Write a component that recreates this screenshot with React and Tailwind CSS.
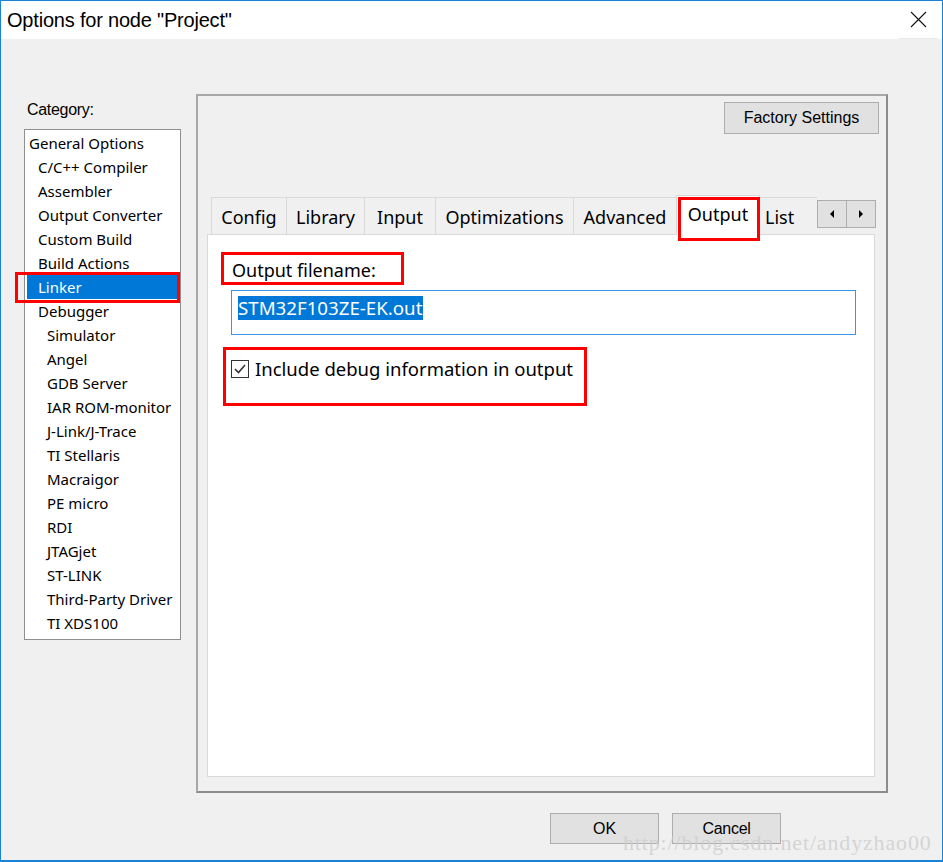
import React from "react";

const categories = [
  { label: "General Options", level: 0 },
  { label: "C/C++ Compiler", level: 1 },
  { label: "Assembler", level: 1 },
  { label: "Output Converter", level: 1 },
  { label: "Custom Build", level: 1 },
  { label: "Build Actions", level: 1 },
  { label: "Linker", level: 1, selected: true },
  { label: "Debugger", level: 1 },
  { label: "Simulator", level: 2 },
  { label: "Angel", level: 2 },
  { label: "GDB Server", level: 2 },
  { label: "IAR ROM-monitor", level: 2 },
  { label: "J-Link/J-Trace", level: 2 },
  { label: "TI Stellaris", level: 2 },
  { label: "Macraigor", level: 2 },
  { label: "PE micro", level: 2 },
  { label: "RDI", level: 2 },
  { label: "JTAGjet", level: 2 },
  { label: "ST-LINK", level: 2 },
  { label: "Third-Party Driver", level: 2 },
  { label: "TI XDS100", level: 2 },
];

const tabs = [
  { label: "Config", w: "w-[75px]" },
  { label: "Library", w: "w-[78px]" },
  { label: "Input", w: "w-[71px]" },
  { label: "Optimizations", w: "w-[138px]" },
  { label: "Advanced", w: "w-[103px]" },
];

const levelPad = ["pl-[4px]", "pl-[13px]", "pl-[22px]"];

const App = () => {
  return (
    <div className="relative w-[943px] h-[862px] bg-[#f0f0f0] border border-[#1883d7] border-b-2 font-['Noto_Sans',sans-serif] text-black overflow-hidden">
      {/* title bar */}
      <div className="h-[38px] bg-white flex items-center justify-between">
        <span className="pl-[6px] text-[20px] tracking-[-0.2px] font-['Liberation_Sans',sans-serif]">
          Options for node "Project"
        </span>
        <div className="w-[38px] h-[38px] flex items-center justify-center border-b border-[#e8e8e8] mr-[5px]">
          <svg width="17" height="17" viewBox="0 0 17 17">
            <path d="M1 1 L16 16 M16 1 L1 16" stroke="#111" strokeWidth="1.1" fill="none" />
          </svg>
        </div>
      </div>

      <div className="flex pl-[23px] pt-[55px]">
        {/* category column */}
        <div className="w-[157px] flex flex-col">
          <div className="h-[35px] pt-[4px] pl-[3px] text-[16px] tracking-[-0.3px] font-['Liberation_Sans',sans-serif]">
            Category:
          </div>
          <div className="w-[157px] h-[511px] bg-white border border-[#8f8f8f] pt-[1px] relative">
            {categories.map((c) => (
              <div
                key={c.label}
                className={`h-[24px] flex items-center text-[15px] ${levelPad[c.level]}`}
              >
                {c.selected ? (
                  <div className="relative -ml-[11px] pl-[11px] w-[152px] h-[24px] bg-[#0078d7] text-white flex items-center">
                    Linker
                    <div className="absolute -left-[12px] -top-[3px] w-[165px] h-[31px] border-[3px] border-[#ff0000]" />
                  </div>
                ) : (
                  c.label
                )}
              </div>
            ))}
          </div>
        </div>

        {/* options group */}
        <div className="ml-[15px] flex flex-col">
          <div className="w-[692px] h-[699px] border-2 border-[#8c8c8c] border-l-[#a8a8a8] border-t-[#a8a8a8] pl-[10px] pr-[7px] pt-[6px] flex flex-col">
            <div className="flex justify-end">
              <button className="w-[155px] h-[32px] bg-[#e1e1e1] border border-[#adadad] text-[16px] font-['Liberation_Sans',sans-serif]">
                Factory Settings
              </button>
            </div>

            {/* tab control */}
            <div className="mt-[62px] flex flex-col">
              <div className="h-[38px] flex items-end pl-[3px] relative">
                {tabs.map((t) => (
                  <div
                    key={t.label}
                    className={`${t.w} h-[37px] bg-[#f0f0f0] border border-b-0 border-r-0 border-[#d9d9d9] flex items-center justify-center pt-[3px] text-[18px]`}
                  >
                    {t.label}
                  </div>
                ))}
                <div className="relative w-[84px] h-[40px] -mb-[1px] bg-white border border-b-0 border-[#d9d9d9] flex justify-center z-10">
                  <span className="pt-[5px] text-[18px]">Output</span>
                  <div className="absolute left-[1px] top-[1px] w-[82px] h-[44px] border-[3px] border-[#ff0000]" />
                </div>
                <div className="w-[57px] h-[37px] overflow-hidden bg-[#f0f0f0] border-t border-[#d9d9d9] pl-[5px] pt-[3px] flex items-center text-[18px]">
                  List
                </div>
                <div className="flex self-start mt-[4px]">
                  <div className="w-[30px] h-[28px] bg-[#e1e1e1] border border-[#adadad] flex items-center justify-center">
                    <svg width="6" height="8" viewBox="0 0 6 8">
                      <path d="M5 0 L1 4 L5 8 Z" fill="#000" />
                    </svg>
                  </div>
                  <div className="w-[30px] h-[28px] bg-[#e1e1e1] border border-[#adadad] -ml-[1px] flex items-center justify-center">
                    <svg width="6" height="8" viewBox="0 0 6 8">
                      <path d="M1 0 L5 4 L1 8 Z" fill="#000" />
                    </svg>
                  </div>
                </div>
              </div>

              <div className="w-[668px] h-[543px] -ml-[1px] bg-white border border-[#d9d9d9] pl-[23px] pt-[17px]">
                <div className="relative w-[183px] h-[33px] border-[3px] border-[#ff0000] -ml-[10px] pl-[8px] pt-[3px] flex items-center text-[18px]">
                  Output filename:
                </div>
                <div className="mt-[5px] w-[625px] h-[45px] border border-[#3c93e2] pl-[6px] pt-[5px]">
                  <span className="inline-block bg-[#0078d7] text-white text-[18.7px] leading-[24px] pr-[1px]">
                    STM32F103ZE-EK.out
                  </span>
                </div>
                <div className="mt-[12px] -ml-[8px] w-[364px] h-[59px] border-[3px] border-[#ff0000] pl-[5px] pt-[8px] flex items-start gap-[6px]">
                  <div className="w-[18px] h-[18px] mt-[2px] border border-[#333] bg-white flex items-center justify-center">
                    <svg width="14" height="14" viewBox="0 0 14 14">
                      <path d="M2 7 L5.5 10.5 L12 3" stroke="#333" strokeWidth="1.6" fill="none" />
                    </svg>
                  </div>
                  <span className="text-[18.5px] leading-[22px]">
                    Include debug information in output
                  </span>
                </div>
              </div>
            </div>
          </div>

          {/* dialog buttons */}
          <div className="flex gap-[13px] mt-[20px] ml-[354px]">
            <button className="w-[109px] h-[31px] bg-[#e1e1e1] border border-[#adadad] text-[16px] font-['Liberation_Sans',sans-serif]">
              OK
            </button>
            <button className="w-[109px] h-[31px] bg-[#e1e1e1] border border-[#adadad] text-[16px] tracking-[-0.3px] font-['Liberation_Sans',sans-serif]">
              Cancel
            </button>
          </div>
        </div>
      </div>

      {/* watermark */}
      <div className="absolute left-[622px] top-[830px] text-[22px] leading-[24px] text-[#cdcdcd]/80 font-['Liberation_Serif',serif] tracking-[0.85px] pointer-events-none">
        http://blog.csdn.net/andyzhao00
      </div>
    </div>
  );
};

export default App;
